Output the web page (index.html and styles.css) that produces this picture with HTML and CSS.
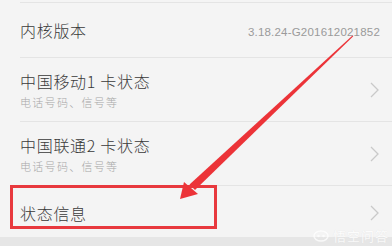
FILE: index.html
```html
<!DOCTYPE html>
<html lang="zh-CN">
<head>
    <meta charset="UTF-8">
    <meta name="viewport" content="width=device-width, initial-scale=1.0">
    <title>关于手机</title>
    <link rel="stylesheet" href="styles.css">
</head>
<body>
    <div class="screen">
        <div class="list">
            <div class="row row-short">
                <span class="title">内核版本</span>
                <span class="value">3.18.24-G201612021852</span>
            </div>
            <div class="row row-tall">
                <div class="text">
                    <span class="title">中国移动1 卡状态</span>
                    <span class="sub">电话号码、信号等</span>
                </div>
                <svg class="chev" width="9" height="16" viewBox="0 0 9 16"><polyline points="1,1 8,8 1,15" fill="none" stroke="#c9c9c9" stroke-width="1.3"/></svg>
            </div>
            <div class="row row-tall">
                <div class="text">
                    <span class="title">中国联通2 卡状态</span>
                    <span class="sub">电话号码、信号等</span>
                </div>
                <svg class="chev" width="9" height="16" viewBox="0 0 9 16"><polyline points="1,1 8,8 1,15" fill="none" stroke="#c9c9c9" stroke-width="1.3"/></svg>
            </div>
            <div class="row row-short">
                <span class="title">状态信息</span>
                <svg class="chev" width="9" height="16" viewBox="0 0 9 16"><polyline points="1,1 8,8 1,15" fill="none" stroke="#c9c9c9" stroke-width="1.3"/></svg>
            </div>
        </div>
        <div class="footer"></div>

        <!-- annotation -->
        <div class="mark-box"></div>
        <svg class="mark-arrow" width="392" height="246" viewBox="0 0 392 246">
            <polygon points="352.5,35.5 353.3,36.3 195,190 189.5,184.5" fill="#ec3338"/>
            <polygon points="180,199 184,182 198,194" fill="#ec3338"/>
        </svg>
        <div class="watermark">
            <svg width="16" height="12" viewBox="0 0 16 12"><ellipse cx="8" cy="6" rx="7" ry="5" fill="none" stroke="#fff" stroke-width="1.5"/><circle cx="5.5" cy="6" r="1.3" fill="#fff"/><circle cx="10.5" cy="6" r="1.3" fill="#fff"/></svg>
            <span>悟空问答</span>
        </div>
    </div>
</body>
</html>
```

FILE: styles.css
```css
body {
    margin: 0;
    padding: 0;
    background-color: #f4f4f4;
    font-family: "Noto Sans CJK SC", "Noto Sans", sans-serif;
    color: #333;
}
.screen {
    position: relative;
    width: 392px;
    height: 246px;
    overflow: hidden;
}
.list {
    padding-top: 2px;
    height: 235px;
}
.row {
    display: flex;
    align-items: center;
    justify-content: space-between;
    margin-left: 20px;
    padding-right: 13px;
    border-top: 1px solid #e4e4e4;
}
.row-short {
    height: 54px;
}
.row-tall {
    height: 63px;
}
.row:first-child {
    height: 54px;
}
.row:last-child {
    height: 53px;
}
.text {
    display: flex;
    flex-direction: column;
    padding-top: 2px;
}
.title {
    font-size: 16px;
    font-weight: 300;
    letter-spacing: 0.7px;
    color: #3a3a3a;
    line-height: 20px;
}
.sub {
    font-size: 11px;
    font-weight: 300;
    color: #a8a8a8;
    letter-spacing: 1.3px;
    line-height: 16px;
    margin-top: 3px;
}
.value {
    font-family: "Liberation Sans", sans-serif;
    font-size: 11.5px;
    letter-spacing: 0.2px;
    color: #9a9a9a;
    margin-right: -1px;
    margin-top: 4px;
}
.chev {
    display: block;
}
.footer {
    height: 9px;
    background-color: #e6e6e6;
}
.mark-box {
    position: absolute;
    left: 10px;
    top: 185px;
    width: 201px;
    height: 38px;
    border: 3px solid #e8393e;
}
.mark-arrow {
    position: absolute;
    left: 0;
    top: 0;
}
.watermark {
    position: absolute;
    left: 313px;
    top: 226px;
    display: flex;
    align-items: center;
    gap: 4px;
    opacity: 0.75;
}
.watermark span {
    font-size: 13px;
    color: #fff;
    letter-spacing: 1px;
    text-shadow: 0 0 1px #ddd;
}
```
